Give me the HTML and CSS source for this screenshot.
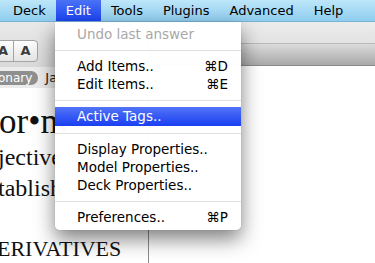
FILE: index.html
```html
<!DOCTYPE html>
<html lang="en">
<head>
  <meta charset="UTF-8">
  <meta name="viewport" content="width=device-width, initial-scale=1.0">
  <title>Edit menu</title>
  <link rel="stylesheet" href="styles.css">
</head>
<body>
  <div class="menubar">
    <span class="menubar-item">Deck</span>
    <span class="menubar-item open">Edit</span>
    <span class="menubar-item">Tools</span>
    <span class="menubar-item">Plugins</span>
    <span class="menubar-item">Advanced</span>
    <span class="menubar-item">Help</span>
  </div>

  <div class="desktop">
    <div class="doc-window">
      <div class="toolbar">
        <div class="seg">
          <span class="seg-btn small">A</span>
          <span class="seg-btn">A</span>
        </div>
      </div>
      <div class="tagbar">
        <span class="pill">onary</span>
        <span class="tag-text">Ja</span>
      </div>
      <div class="content">
        <div class="headword">or•m</div>
        <div class="line">jective</div>
        <div class="line">tablish</div>
        <div class="caps">ERIVATIVES</div>
      </div>
    </div>
    <div class="side-window">
      <div class="side-head"></div>
      <div class="side-bar"></div>
      <div class="side-body"></div>
    </div>
  </div>

  <div class="menu">
    <div class="menu-item disabled"><span>Undo last answer</span></div>
    <div class="sep"></div>
    <div class="menu-item"><span>Add Items..</span><span class="key">⌘D</span></div>
    <div class="menu-item"><span>Edit Items..</span><span class="key">⌘E</span></div>
    <div class="sep"></div>
    <div class="menu-item active"><span>Active Tags..</span></div>
    <div class="sep"></div>
    <div class="menu-item"><span>Display Properties..</span></div>
    <div class="menu-item"><span>Model Properties..</span></div>
    <div class="menu-item"><span>Deck Properties..</span></div>
    <div class="sep"></div>
    <div class="menu-item"><span>Preferences..</span><span class="key">⌘P</span></div>
  </div>
</body>
</html>
```

FILE: styles.css
```css
body { margin: 0; width: 375px; height: 263px; overflow: hidden; background: #fff; font-family: "DejaVu Sans", sans-serif; position: relative; }

.menubar { display: flex; height: 21px; padding-left: 3px; background: linear-gradient(#bde6f9, #8fcdef); border-bottom: 1px solid #79b3d4; font-size: 13px; line-height: 21px; color: #000; }
.menubar-item { padding: 0 10px; }
.menubar-item.open { background: linear-gradient(#4a72f6, #1c44f2); color: #fff; }

.desktop { display: flex; height: 241px; }

.doc-window { width: 148px; border-right: 1px solid #8c8c8c; display: flex; flex-direction: column; overflow: hidden; }
.toolbar { height: 53px; background: linear-gradient(#e9e9e9, #d9d9d9); display: flex; align-items: flex-end; }
.seg { display: flex; margin: 0 0 5px -8px; height: 20px; border: 1px solid #a4a4a4; border-radius: 4px; background: linear-gradient(#fdfdfd, #e4e4e4); }
.seg-btn { width: 23px; text-align: center; font: bold 13px/20px "DejaVu Sans", sans-serif; color: #3c3c3c; }
.seg-btn.small { width: 20px; border-right: 1px solid #a4a4a4; }
.tagbar { height: 24px; background: #ececec; display: flex; align-items: center; gap: 7px; }
.pill { margin-left: -6px; padding: 0 6px 0 4px; height: 14px; line-height: 14px; border-radius: 7px; background: #8f8f8f; color: #fff; font-size: 12px; }
.tag-text { font-size: 13px; color: #222; }

.content { flex: 1; background: #fff; font-family: "Liberation Serif", serif; color: #111; white-space: nowrap; }
.headword { font-size: 35px; line-height: 40px; margin: 14px 0 0 -1px; }
.line { font-size: 24px; line-height: 31px; margin-left: -2px; }
.caps { font-size: 22px; line-height: 28px; margin: 31px 0 0 -3px; }

.side-window { flex: 1; display: flex; flex-direction: column; }
.side-head { height: 21px; background: linear-gradient(#ececec, #e3e3e3); border-bottom: 1px solid #b9b9b9; }
.side-bar { height: 21px; background: linear-gradient(#dcdcdc, #a8a8a8); border-bottom: 1px solid #8a8a8a; }
.side-body { flex: 1; background: #fff; }

.menu { position: absolute; left: 55px; top: 22px; width: 186px; padding: 3px 0 4px; background: rgba(255,255,255,0.98); border-radius: 0 0 5px 5px; box-shadow: 0 9px 20px rgba(0,0,0,0.5), 0 0 1px rgba(0,0,0,0.3); font-size: 13.5px; color: #000; }
.menu-item { display: flex; justify-content: space-between; height: 18px; line-height: 18px; padding: 0 13px 0 22px; }
.menu-item.disabled { color: #a8a8a8; }
.menu-item.active { background: linear-gradient(#5274f6, #1a3ff2); color: #fff; height: 19px; line-height: 19px; }
.sep { height: 1px; background: #e1e1e1; margin: 7px 0 6px; }
```
